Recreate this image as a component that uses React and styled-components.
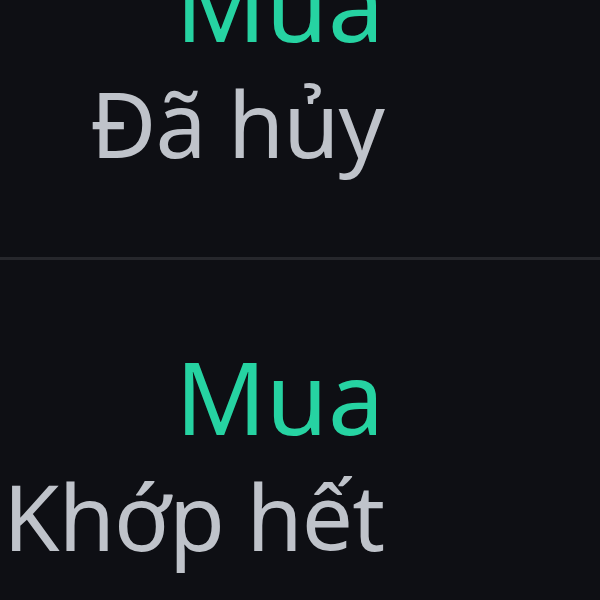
import React from "react";
import styled, { createGlobalStyle } from "styled-components";

const Global = createGlobalStyle`
  html, body { margin: 0; padding: 0; background: #0e0f14; }
  body { width: 600px; height: 600px; overflow: hidden; font-family: "Noto Sans", "Liberation Sans", sans-serif; }
`;

const Page = styled.div`
  width: 600px;
  height: 600px;
  overflow: hidden;
  background: #0e0f14;
`;

const List = styled.div`
  display: flex;
  flex-direction: column;
  margin-top: -133px;
`;

const Row = styled.div`
  display: flex;
  flex-direction: column;
  align-items: flex-end;
  padding: 74px 216px 75px 0;
  border-bottom: 3px solid #26272c;
`;

const Side = styled.div`
  font-size: 100px;
  line-height: 124px;
  white-space: nowrap;
  color: #26d3a2;
`;

const Status = styled.div`
  font-size: 91px;
  line-height: 117px;
  letter-spacing: -1px;
  white-space: nowrap;
  color: #bfc3ca;
`;

const orders = [
  { side: "Mua", status: "Đã hủy" },
  { side: "Mua", status: "Khớp hết" },
];

export default function App() {
  return (
    <Page>
      <Global />
      <List>
        {orders.map((o, i) => (
          <Row key={i}>
            <Side>{o.side}</Side>
            <Status>{o.status}</Status>
          </Row>
        ))}
      </List>
    </Page>
  );
}
